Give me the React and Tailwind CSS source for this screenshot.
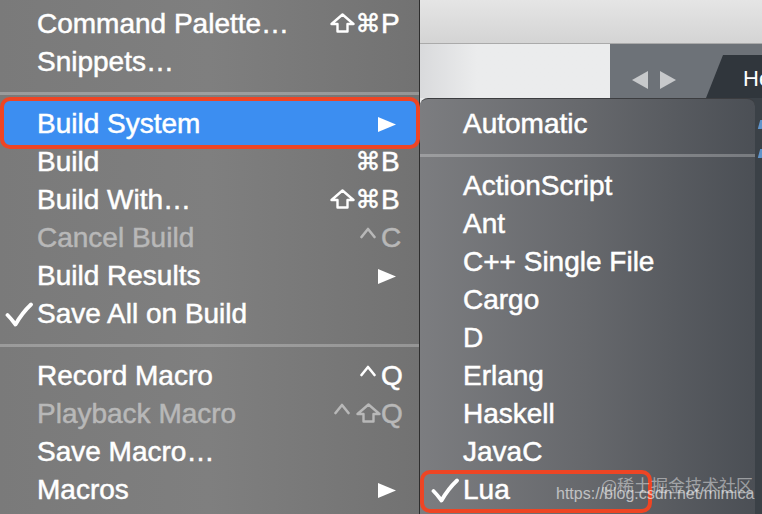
import React from "react";

const leftItems = [
  { label: "Command Palette…", keys: ["shift", "⌘", "P"] },
  { label: "Snippets…" },
  { sep: true },
  { label: "Build System", arrow: true, active: true },
  { label: "Build", keys: ["", "⌘", "B"] },
  { label: "Build With…", keys: ["shift", "⌘", "B"] },
  { label: "Cancel Build", keys: ["", "ctrl", "C"], disabled: true },
  { label: "Build Results", arrow: true },
  { label: "Save All on Build", checked: true },
  { sep: true },
  { label: "Record Macro", keys: ["", "ctrl", "Q"] },
  { label: "Playback Macro", keys: ["ctrl", "shift", "Q"], disabled: true },
  { label: "Save Macro…" },
  { label: "Macros", arrow: true },
];

const buildSystems = [
  "ActionScript",
  "Ant",
  "C++ Single File",
  "Cargo",
  "D",
  "Erlang",
  "Haskell",
  "JavaC",
];

function Check() {
  return (
    <svg width="28" height="25" viewBox="0 0 28 25" fill="none">
      <path
        d="M2.5 13 Q6 16.5 10.5 22.5 Q17 11 26 2.5"
        stroke="currentColor"
        strokeWidth="3.8"
        strokeLinecap="round"
        strokeLinejoin="round"
      />
    </svg>
  );
}

function Arrow() {
  return (
    <svg width="18" height="15" viewBox="0 0 18 15" className="mr-[5px]">
      <polygon points="0,0 18,7.5 0,15" fill="currentColor" />
    </svg>
  );
}

// modifier key glyphs
function KeySym({ k }) {
  if (k === "shift")
    return (
      <svg width="25" height="20" viewBox="0 0 25 20" fill="none" className="mx-auto -mt-[2px]">
        <path
          d="M12.5 1.5 L23.5 11 L17.5 11 L17.5 18.5 L7.5 18.5 L7.5 11 L1.5 11 Z"
          stroke="currentColor"
          strokeWidth="2.4"
          strokeLinejoin="round"
        />
      </svg>
    );
  if (k === "ctrl")
    return (
      <svg width="16" height="20" viewBox="0 0 16 20" fill="none" className="mx-auto -mt-[2px]">
        <path
          d="M1.5 10 L8 2 L14.5 10"
          stroke="currentColor"
          strokeWidth="2.6"
          strokeLinecap="round"
          strokeLinejoin="round"
        />
      </svg>
    );
  if (k === "⌘")
    return <span className="font-['DejaVu_Sans',sans-serif] text-[25px]">⌘</span>;
  return null;
}

function Keys({ keys }) {
  return (
    <span className="flex items-center">
      <span className="w-[26px] flex justify-center">
        <KeySym k={keys[0]} />
      </span>
      <span className="w-[26px] flex justify-center">
        <KeySym k={keys[1]} />
      </span>
      <span className="w-[20px]">{keys[2]}</span>
    </span>
  );
}

function MenuRow({ item }) {
  return (
    <div
      className={`relative h-[38px] flex items-center pr-[18px] ${
        item.disabled ? "text-[#b8b8b8]" : "text-white"
      }`}
    >
      {item.active && (
        <span className="absolute left-0 -right-px -top-[8px] -bottom-[6px] rounded-[10px] border-[4px] border-[#ee4524] bg-[#3c8ef1]" />
      )}
      <span className="relative w-[37px] shrink-0 pl-[5px] flex items-center">
        {item.checked && <Check />}
      </span>
      <span className="relative flex-1 whitespace-nowrap">{item.label}</span>
      <span className="relative flex items-center">
        {item.keys && <Keys keys={item.keys} />}
        {item.arrow && <Arrow />}
      </span>
    </div>
  );
}

function Separator() {
  return (
    <div className="h-[24px] flex items-center">
      <div className="h-[3px] w-full bg-white/25" />
    </div>
  );
}

function LeftMenu() {
  return (
    <div className="w-[420px] shrink-0 h-full border-r border-[#2e2e2e] bg-linear-to-r from-[#7a7a7a] via-[#7f7f7f] to-[#727272] pt-[5px] text-[28px] leading-[38px] [-webkit-text-stroke:0.5px_currentColor]">
      {leftItems.map((item, i) =>
        item.sep ? <Separator key={i} /> : <MenuRow key={i} item={item} />
      )}
    </div>
  );
}

function SubRow({ label, checked, boxed }) {
  return (
    <div className="relative h-[38px] flex items-center text-white">
      {boxed && (
        <span className="absolute left-0 w-[232px] -top-px -bottom-[4px] rounded-[10px] border-[4px] border-[#ee4524]" />
      )}
      <span className="w-[43px] shrink-0 pl-[11px] flex items-center">
        {checked && <Check />}
      </span>
      <span className="whitespace-nowrap">{label}</span>
    </div>
  );
}

function SubMenu() {
  return (
    <div className="w-[335px] shrink-0 rounded-t-[8px] border-t border-[#3c3d40] bg-linear-to-r from-[#7c7d80] via-[#66686c] to-[#4b4f55] pt-[6px] text-[28px] leading-[38px] [-webkit-text-stroke:0.5px_currentColor]">
      <SubRow label="Automatic" />
      <div className="h-[24px] flex items-center">
        <div className="h-[3px] w-full bg-white/25" />
      </div>
      {buildSystems.map((s) => (
        <SubRow key={s} label={s} />
      ))}
      <SubRow label="Lua" checked boxed />
    </div>
  );
}

export default function App() {
  return (
    <div className="relative w-[762px] h-[514px] overflow-hidden flex bg-[#7a7a7a] font-['Liberation_Sans',sans-serif]">
      <LeftMenu />
      <div className="flex-1 flex flex-col">
        <div className="h-[44px] shrink-0 border-b border-[#aaaaaa] bg-linear-to-b from-[#e5e5e5] to-[#d4d4d4]" />
        <div className="h-[54px] shrink-0 flex">
          <div className="w-[190px] bg-linear-to-r from-[#d9dadc] to-[#ebeced] to-30%" />
          <div className="flex-1 bg-[#6d7278] flex items-end">
            <div className="flex items-center gap-[12px] ml-[22px] mb-[9px]">
              <svg width="16" height="18" viewBox="0 0 16 18">
                <polygon points="16,0 0,9 16,18" fill="#c7c9cb" />
              </svg>
              <svg width="16" height="18" viewBox="0 0 16 18">
                <polygon points="0,0 16,9 0,18" fill="#c7c9cb" />
              </svg>
            </div>
            <div className="ml-auto w-[57px] h-[43px] bg-[#30363c] [clip-path:polygon(17px_0,100%_0,100%_100%,0_100%)] pl-[37px] pt-[12px] text-[22px] leading-[24px] text-white">
              He
            </div>
          </div>
        </div>
        <div className="flex-1 flex bg-[linear-gradient(to_right,#e9eaeb_190px,#3b4147_190px)]">
          <SubMenu />
          <div className="flex-1 bg-[#3b4147] pt-[22px] pl-[4px] flex flex-col gap-[20px]">
            <span className="h-[9px] w-[4px] bg-[#5f93c9] skew-x-[-15deg]" />
            <span className="h-[9px] w-[4px] bg-[#5f93c9] skew-x-[-15deg]" />
          </div>
        </div>
      </div>
      <div className="absolute left-[601px] top-[475px] text-[17px] leading-[20px] text-white/45 font-['Noto_Sans_CJK_SC',sans-serif] whitespace-nowrap">
        @稀土掘金技术社区
      </div>
      <div className="absolute left-[556px] top-[486px] text-[16px] leading-[16px] text-white/60 whitespace-nowrap">
        https://blog.csdn.net/mimica
      </div>
    </div>
  );
}
